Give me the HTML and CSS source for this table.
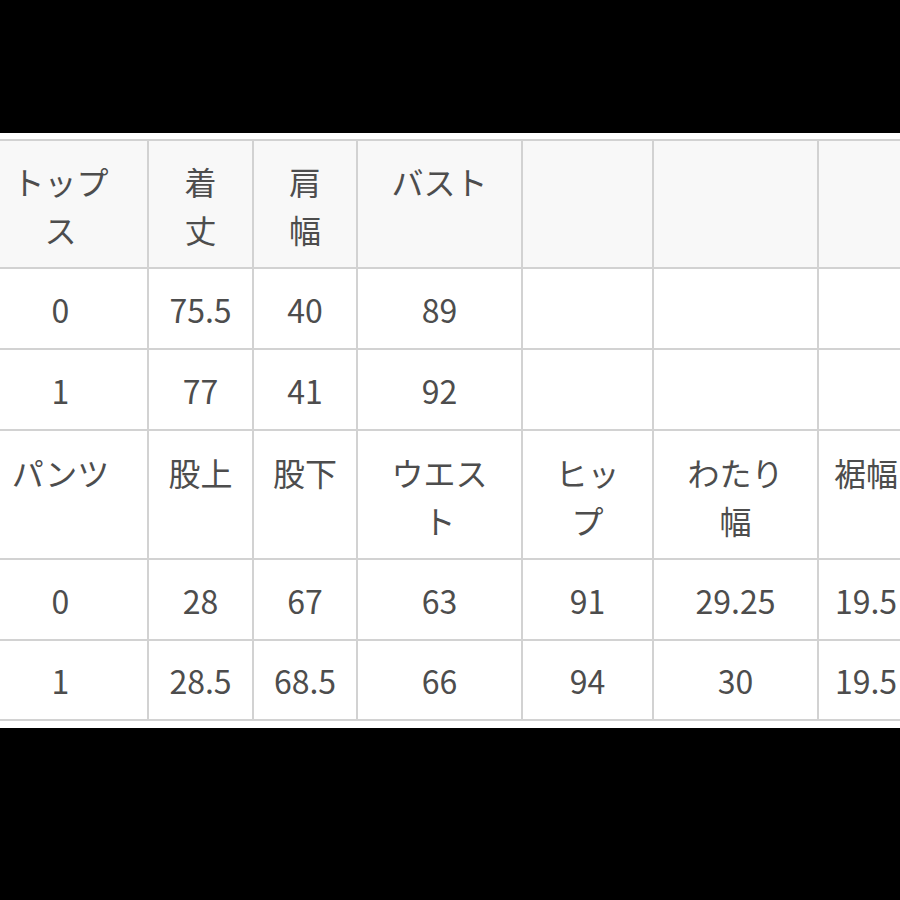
FILE: index.html
```html
<!DOCTYPE html>
<html lang="ja">
<head>
<meta charset="utf-8">
<link rel="stylesheet" href="styles.css">
</head>
<body>
<div class="band">
  <div class="grid">
    <div class="c head">トップ<br>ス</div>
    <div class="c head">着<br>丈</div>
    <div class="c head">肩<br>幅</div>
    <div class="c head">バスト</div>
    <div class="c head"></div>
    <div class="c head"></div>
    <div class="c head"></div>

    <div class="c">0</div>
    <div class="c">75.5</div>
    <div class="c">40</div>
    <div class="c">89</div>
    <div class="c"></div>
    <div class="c"></div>
    <div class="c"></div>

    <div class="c">1</div>
    <div class="c">77</div>
    <div class="c">41</div>
    <div class="c">92</div>
    <div class="c"></div>
    <div class="c"></div>
    <div class="c"></div>

    <div class="c head2">パンツ</div>
    <div class="c head2">股上</div>
    <div class="c head2">股下</div>
    <div class="c head2">ウエス<br>ト</div>
    <div class="c head2">ヒッ<br>プ</div>
    <div class="c head2">わたり<br>幅</div>
    <div class="c head2">裾幅</div>

    <div class="c">0</div>
    <div class="c">28</div>
    <div class="c">67</div>
    <div class="c">63</div>
    <div class="c">91</div>
    <div class="c">29.25</div>
    <div class="c">19.5</div>

    <div class="c">1</div>
    <div class="c">28.5</div>
    <div class="c">68.5</div>
    <div class="c">66</div>
    <div class="c">94</div>
    <div class="c">30</div>
    <div class="c">19.5</div>
  </div>
</div>
</body>
</html>
```

FILE: styles.css
```css
html, body {
  margin: 0;
  padding: 0;
  background: #000;
}
body {
  width: 900px;
  height: 900px;
  overflow: hidden;
}
.band {
  margin-top: 133px;
  background: #fff;
  padding: 6px 0 7px 0;
  overflow: hidden;
  width: 900px;
}
.grid {
  display: grid;
  margin-left: -26px;
  width: 941px;
  grid-template-columns: 175px 105px 104px 165px 131px 165px 96px;
  grid-template-rows: 128px 81px 81px 129px 81px 80px;
  border-top: 2px solid #d2d2d2;
  font-family: "Noto Sans CJK JP", "Noto Sans", sans-serif;
  font-size: 32px;
  color: #4d4d4d;
}
.c {
  box-sizing: border-box;
  border-right: 2px solid #d2d2d2;
  border-bottom: 2px solid #d2d2d2;
  display: flex;
  align-items: center;
  justify-content: center;
  text-align: center;
  line-height: 48px;
  white-space: nowrap;
}
.head, .head2 {
  align-items: flex-start;
  padding-top: 16px;
}
.head {
  background: #f8f8f8;
}
.head2 {
  padding-top: 17px;
}
```
